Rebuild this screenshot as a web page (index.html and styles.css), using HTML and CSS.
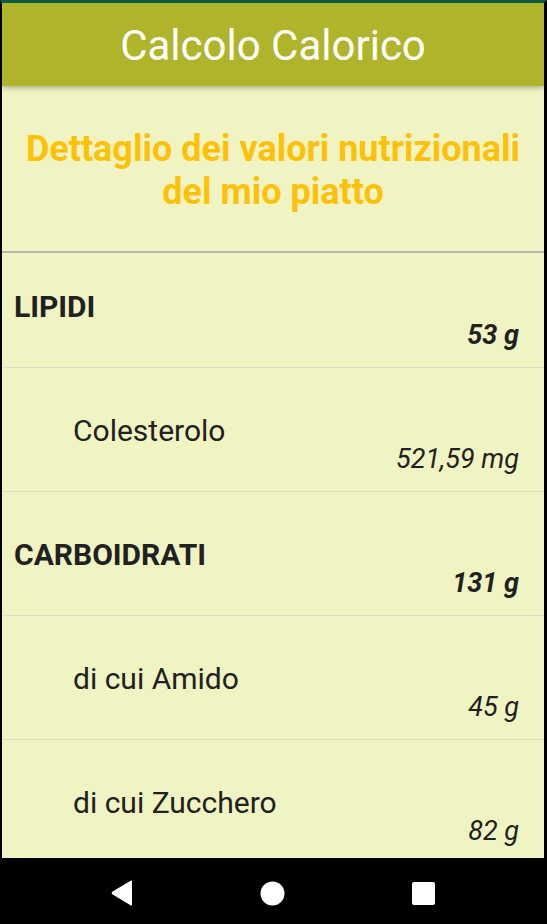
FILE: index.html
```html
<!DOCTYPE html>
<html lang="it">

<head>
    <meta charset="UTF-8">
    <meta name="viewport" content="width=device-width, initial-scale=1.0">
    <title>Calcolo Calorico</title>
    <link rel="stylesheet" href="styles.css">
</head>

<body>
    <div class="phone">
        <div class="toolbar">Calcolo Calorico</div>

        <div class="content">
            <!--intestazione-->
            <div class="intro">Dettaglio dei valori nutrizionali<br>del mio piatto</div>
            <div class="divider"></div>

            <!--lista valori-->
            <ul class="list">
                <li class="row first">
                    <div class="label main">LIPIDI</div>
                    <div class="value main">53 g</div>
                </li>
                <li class="row sub">
                    <div class="label">Colesterolo</div>
                    <div class="value">521,59 mg</div>
                </li>
                <li class="row">
                    <div class="label main">CARBOIDRATI</div>
                    <div class="value main">131 g</div>
                </li>
                <li class="row sub">
                    <div class="label">di cui Amido</div>
                    <div class="value">45 g</div>
                </li>
                <li class="row sub">
                    <div class="label">di cui Zucchero</div>
                    <div class="value">82 g</div>
                </li>
            </ul>
        </div>

        <div class="navbar">
            <svg class="nav-btn" width="22" height="26" viewBox="0 0 22 26">
                <path d="M21 1.5 L21 24.5 Q21 26 19.6 25.2 L1.2 14.2 Q0 13 1.2 11.8 L19.6 0.8 Q21 0 21 1.5 Z" fill="#fff" />
            </svg>
            <svg class="nav-btn" width="25" height="25" viewBox="0 0 25 25">
                <circle cx="12.5" cy="12.5" r="12" fill="#fff" />
            </svg>
            <svg class="nav-btn" width="23" height="23" viewBox="0 0 23 23">
                <rect x="0" y="0" width="23" height="23" rx="2" fill="#fff" />
            </svg>
        </div>
    </div>
</body>

</html>
```

FILE: styles.css
```css
* {
    margin: 0;
    padding: 0;
    list-style: none;
    box-sizing: border-box;
}

body {
    background: #000;
    font-family: Roboto, "Noto Sans", sans-serif;
}

.phone {
    width: 547px;
    height: 924px;
    display: flex;
    flex-direction: column;
    border-top: 3px solid #0e5a3d;
    border-left: 2px solid #000;
    border-right: 3px solid #000;
    overflow: hidden;
}

.toolbar {
    position: relative;
    z-index: 1;
    height: 83px;
    padding-top: 22px;
    background: #afb42b;
    color: #fff;
    font-size: 42px;
    line-height: 42px;
    text-align: center;
    box-shadow: 0 2px 5px rgba(0, 0, 0, .28);
}

.content {
    flex: 1;
    background: #f0f4c3;
    overflow: hidden;
}

.intro {
    padding: 42px 6px 37px;
    color: #ffc107;
    font-size: 36px;
    font-weight: bold;
    line-height: 43px;
    text-align: center;
}

.divider {
    height: 2px;
    background: #b7b9aa;
}

.row {
    padding: 48px 25px 18px 12px;
    border-bottom: 1px solid #dcdfc2;
    color: #212121;
}

.row.first {
    padding-top: 39px;
}

.row.sub {
    padding-left: 71px;
}

.label {
    font-size: 30px;
    line-height: 30px;
}

.label.main {
    font-weight: bold;
}

.value {
    font-size: 27px;
    line-height: 27px;
    font-style: italic;
    text-align: right;
}

.value.main {
    font-weight: bold;
}

.navbar {
    height: 66px;
    background: #000;
    display: flex;
    align-items: center;
    justify-content: center;
    gap: 127px;
    padding-top: 4px;
}

.nav-btn {
    display: block;
}
```
